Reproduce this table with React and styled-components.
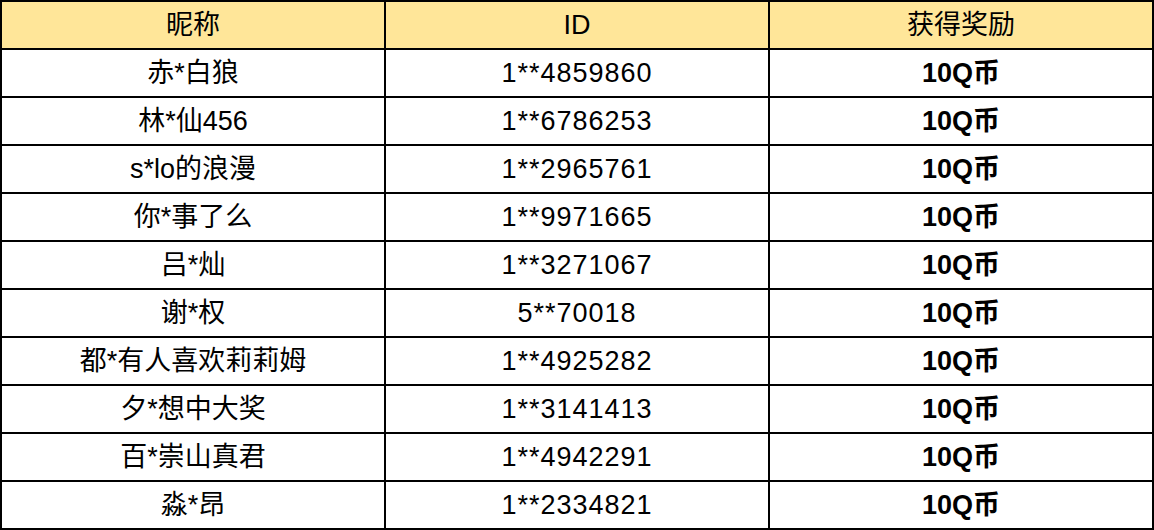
import styled, { createGlobalStyle } from "styled-components";

const GlobalStyle = createGlobalStyle`
	body {
		margin: 0;
		background: #ffffff;
		font-family: "Liberation Sans", "Noto Sans CJK SC", sans-serif;
	}
`;

const winners = [
	{ name: "赤*白狼", id: "1**4859860" },
	{ name: "林*仙456", id: "1**6786253" },
	{ name: "s*lo的浪漫", id: "1**2965761" },
	{ name: "你*事了么", id: "1**9971665" },
	{ name: "吕*灿", id: "1**3271067" },
	{ name: "谢*权", id: "5**70018" },
	{ name: "都*有人喜欢莉莉姆", id: "1**4925282" },
	{ name: "夕*想中大奖", id: "1**3141413" },
	{ name: "百*崇山真君", id: "1**4942291" },
	{ name: "淼*昂", id: "1**2334821" },
];

const App = () => {
	return (
		<>
			<GlobalStyle />
			<Table>
				<thead>
					<tr>
						<HeadCell>昵称</HeadCell>
						<HeadCell>ID</HeadCell>
						<HeadCell>获得奖励</HeadCell>
					</tr>
				</thead>
				<tbody>
					{winners.map((item) => (
						<tr key={item.id}>
							<Cell>{item.name}</Cell>
							<Cell $spaced>{item.id}</Cell>
							<Cell $bold>10Q币</Cell>
						</tr>
					))}
				</tbody>
			</Table>
		</>
	);
};

export default App;

const Table = styled.table`
	width: 1154px;
	border-collapse: collapse;
	table-layout: fixed;
	color: #000000;
	font-size: 27px;
`;

const HeadCell = styled.th`
	height: 46px;
	padding: 0;
	border: 2px solid #000000;
	background-color: #ffe699;
	font-weight: 400;
	text-align: center;
	line-height: 46px;
`;

const Cell = styled.td`
	height: 46px;
	padding: 0;
	border: 2px solid #000000;
	text-align: center;
	line-height: 46px;
	font-weight: ${(p) => (p.$bold ? 700 : 400)};
	letter-spacing: ${(p) => (p.$spaced ? "1px" : "0")};
`;
